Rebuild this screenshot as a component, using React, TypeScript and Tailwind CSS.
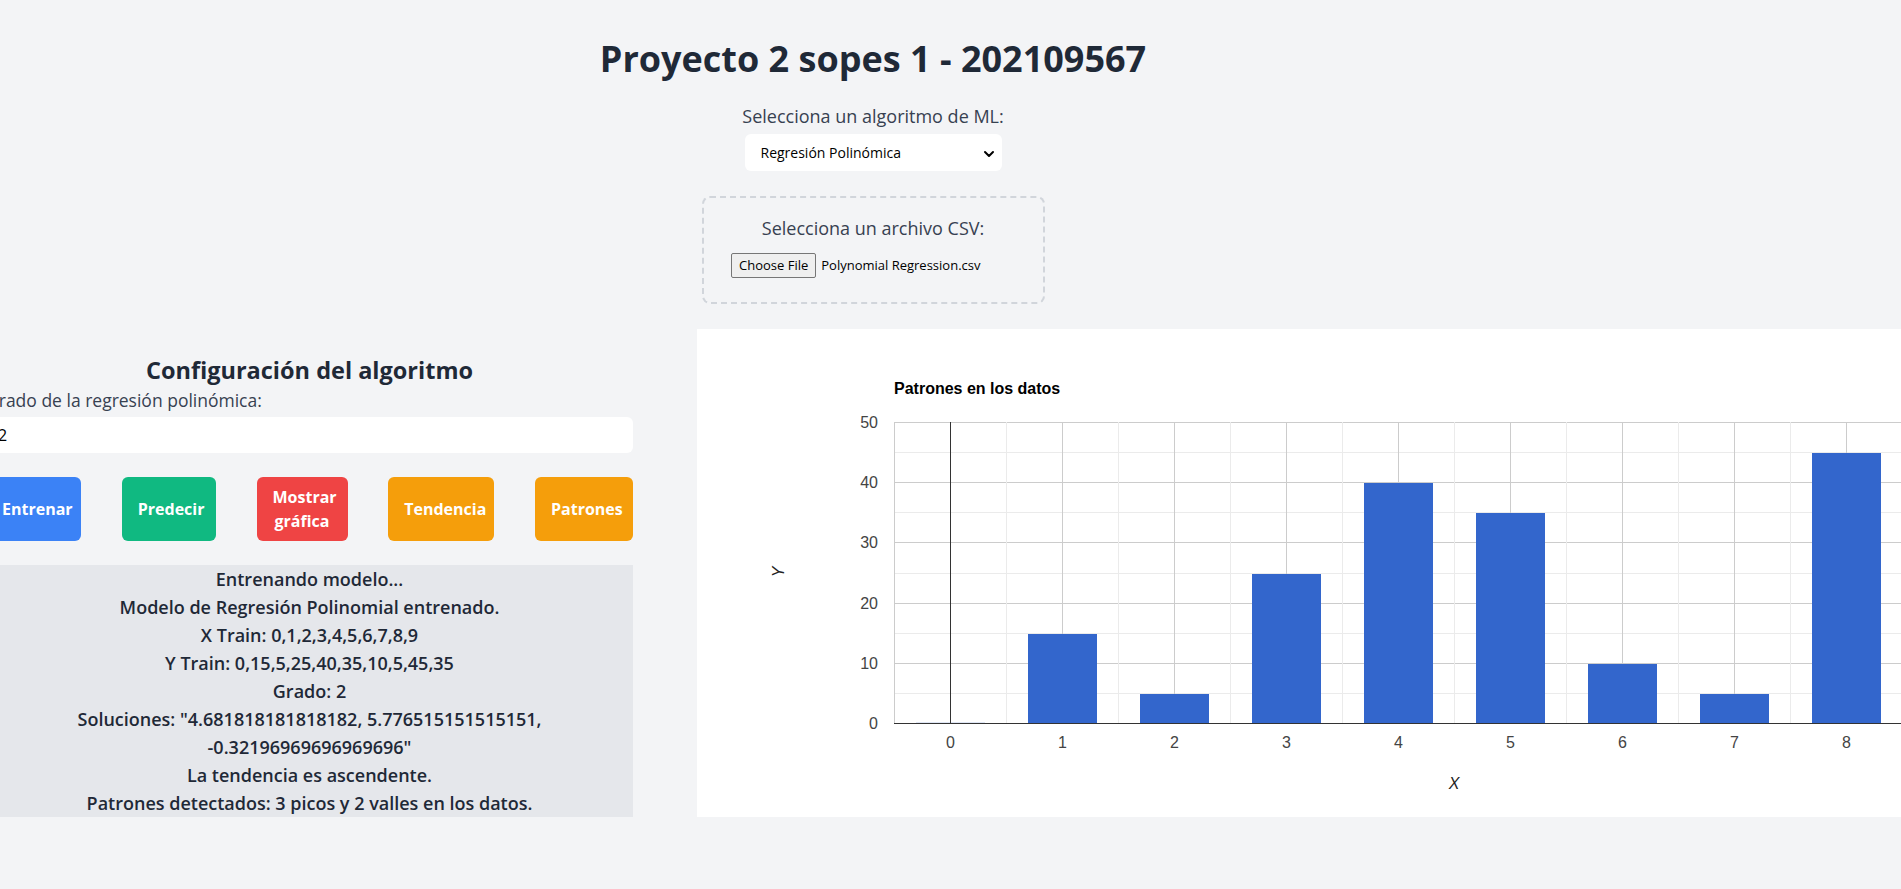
import { ChevronDown } from 'lucide-react';

const VALUES = [0, 15, 5, 25, 40, 35, 10, 5, 45, 35];

// chart geometry, relative to the white panel
const X0 = 253;
const STEP = 112;
const Y0 = 394;
const UNIT = 6.02;
const PLOT_LEFT = 197;
const PLOT_RIGHT = 1317;

const xAt = (i: number) => X0 + STEP * i;
const yAt = (v: number) => Math.round(Y0 - UNIT * v);

function PatternsChart() {
  const hLines = Array.from({ length: 11 }, (_, k) => k * 5);
  const vLines = Array.from({ length: 21 }, (_, k) => -0.5 + k * 0.5);

  return (
    <svg width={1300} height={488} fontFamily="'Liberation Sans', Arial, sans-serif">
      {/* Title */}
      <text x={PLOT_LEFT} y={65} fontSize={16} fontWeight="bold" fill="#000">
        Patrones en los datos
      </text>

      {/* Horizontal grid */}
      {hLines.map((v) => (
        <rect
          key={`h${v}`}
          x={PLOT_LEFT}
          y={yAt(v)}
          width={PLOT_RIGHT - PLOT_LEFT}
          height={1}
          fill={v % 10 === 0 ? '#cccccc' : '#ebebeb'}
        />
      ))}

      {/* Vertical grid */}
      {vLines.map((k) => (
        <rect
          key={`v${k}`}
          x={Math.round(xAt(k))}
          y={yAt(50)}
          width={1}
          height={yAt(0) - yAt(50)}
          fill={Number.isInteger(k) || k === -0.5 ? '#cccccc' : '#ebebeb'}
        />
      ))}

      {/* Bars */}
      {VALUES.map((v, i) =>
        v > 0 ? (
          <rect key={`b${i}`} x={xAt(i) - 34} y={yAt(v) + 1} width={69} height={yAt(0) - yAt(v)} fill="#3366cc" />
        ) : (
          <rect key={`b${i}`} x={xAt(i) - 34} y={yAt(0) - 1} width={69} height={1} fill="#dfe6f5" />
        )
      )}

      {/* Baselines */}
      <rect x={PLOT_LEFT} y={yAt(0)} width={PLOT_RIGHT - PLOT_LEFT} height={1} fill="#333333" />
      <rect x={xAt(0)} y={yAt(50)} width={1} height={yAt(0) - yAt(50) + 1} fill="#333333" />

      {/* Y labels */}
      {[0, 10, 20, 30, 40, 50].map((v) => (
        <text key={`yl${v}`} x={181} y={yAt(v) + 6} fontSize={16} textAnchor="end" fill="#444">
          {v}
        </text>
      ))}

      {/* X labels */}
      {Array.from({ length: 10 }, (_, i) => (
        <text key={`xl${i}`} x={xAt(i) + 0.5} y={419} fontSize={16} textAnchor="middle" fill="#444">
          {i}
        </text>
      ))}

      {/* Axis titles */}
      <text x={757} y={460} fontSize={16} fontStyle="italic" textAnchor="middle" fill="#222">
        X
      </text>
      <text
        x={87}
        y={243}
        fontSize={16}
        fontStyle="italic"
        textAnchor="middle"
        fill="#222"
        transform="rotate(-90 87 243)"
      >
        Y
      </text>
    </svg>
  );
}

const BUTTONS = [
  { label: 'Entrenar', cls: 'w-[95px] bg-[#3b82f6]' },
  { label: 'Predecir', cls: 'w-[94px] bg-[#10b981]' },
  { label: 'Mostrar gráfica', cls: 'w-[91px] bg-[#ef4444]' },
  { label: 'Tendencia', cls: 'w-[106px] bg-[#f59e0b]' },
  { label: 'Patrones', cls: 'w-[98px] bg-[#f59e0b]' },
];

const OUTPUT = [
  'Entrenando modelo...',
  'Modelo de Regresión Polinomial entrenado.',
  'X Train: 0,1,2,3,4,5,6,7,8,9',
  'Y Train: 0,15,5,25,40,35,10,5,45,35',
  'Grado: 2',
  'Soluciones: "4.681818181818182, 5.776515151515151, -0.32196969696969696"',
  'La tendencia es ascendente.',
  'Patrones detectados: 3 picos y 2 valles en los datos.',
];

export default function App() {
  return (
    <div className="min-h-screen w-full overflow-hidden bg-[#f3f4f6] font-['Open_Sans',sans-serif] text-[#1f2937]">
      {/* Header / pickers */}
      <div className="w-[1746px] flex flex-col items-center pt-[39px]">
        <h1 className="text-4xl font-bold text-[#1f2937]">Proyecto 2 sopes 1 - 202109567</h1>

        <div className="mt-[23px] flex flex-col items-center">
          <label className="text-lg text-[#374151]">Selecciona un algoritmo de ML:</label>
          <div className="relative mt-1 w-[257px]">
            <select className="w-full h-[37px] appearance-none rounded-md bg-white pl-4 pr-8 text-sm text-black outline-none">
              <option>Regresión Polinómica</option>
            </select>
            <ChevronDown className="pointer-events-none absolute right-[5px] top-[12px] h-4 w-4 text-black" strokeWidth={3} />
          </div>
        </div>

        <div className="mt-[25px] w-[343px] rounded-lg border-2 border-dashed border-[#d1d5db] pt-4 pb-6 flex flex-col items-center">
          <label className="text-lg text-[#374151]">Selecciona un archivo CSV:</label>
          <div className="mt-[11px] h-[25px] w-[284px] flex items-center gap-[5px] text-[13px] text-black">
            <span className="h-[25px] flex items-center rounded-[2px] border border-[#767676] bg-[#efefef] px-[7px]">
              Choose File
            </span>
            <span>Polynomial Regression.csv</span>
          </div>
        </div>
      </div>

      {/* Config + chart */}
      <div className="mt-[25px] -ml-[14px] flex items-end gap-16">
        <div className="w-[647px] shrink-0 flex flex-col">
          <h2 className="text-[23.5px] leading-8 font-bold text-center text-[#1f2937]">Configuración del algoritmo</h2>
          <label className="mt-0.5 text-[17.5px] leading-6 text-[#374151]">Grado de la regresión polinómica:</label>
          <input
            defaultValue="2"
            className="mt-[5px] h-9 w-full rounded-md bg-white px-3 text-base text-black outline-none"
          />

          <div className="mt-6 flex justify-between">
            {BUTTONS.map((b) => (
              <button
                key={b.label}
                className={`${b.cls} rounded-md px-4 py-2 text-base font-bold leading-6 text-white`}
              >
                {b.label}
              </button>
            ))}
          </div>

          <div className="mt-6 bg-[#e5e7eb] text-center text-lg font-semibold text-[#1f2937]">
            {OUTPUT.map((line) => (
              <p key={line}>{line}</p>
            ))}
          </div>
        </div>

        <div className="w-[1400px] h-[488px] shrink-0 bg-white">
          <PatternsChart />
        </div>
      </div>
    </div>
  );
}
